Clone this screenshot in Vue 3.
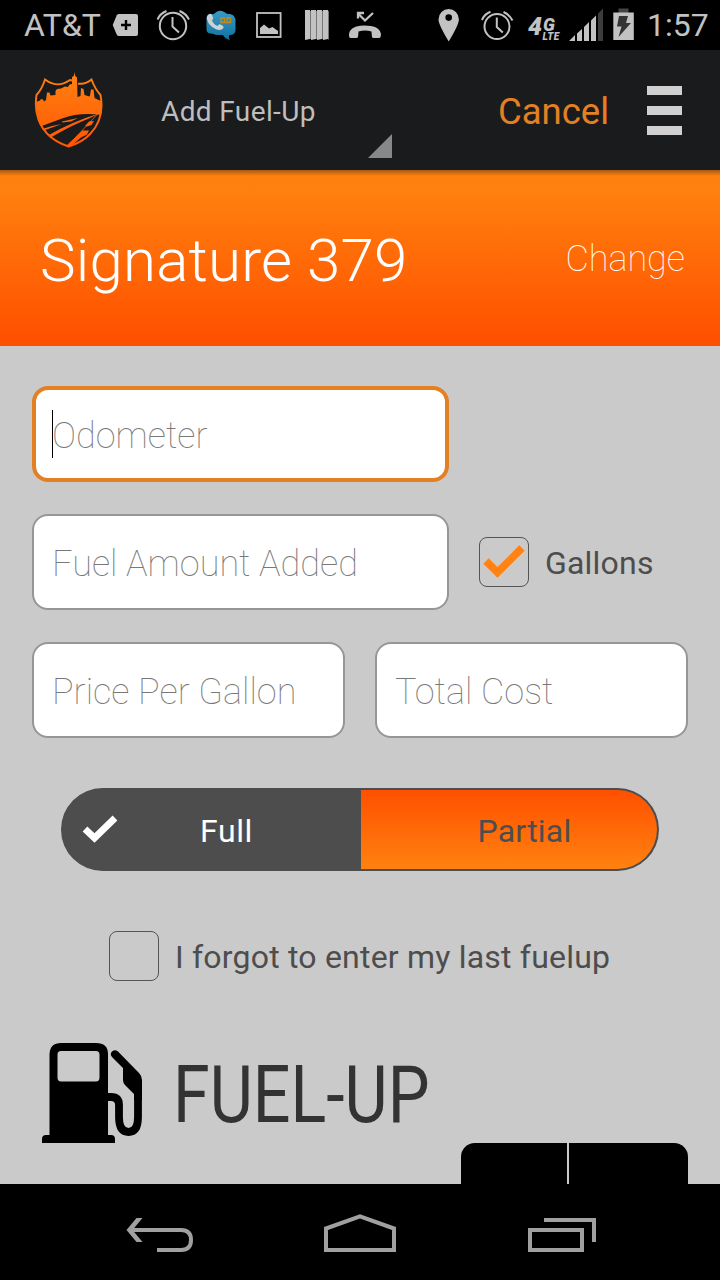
<script setup>
import { ref } from 'vue'

const fillType = ref('full')
const gallons = ref(true)
const forgot = ref(false)
</script>

<template>
  <div class="screen">
    <div class="status-bar">
      <span class="carrier">AT&amp;T</span>
      <svg width="40" height="50" viewBox="108 0 40 50">
        <path d="M119 14h17q2 0 2 2v18q0 2-2 2h-17q-1.500 0-2.200-1.300L112.700 25l4.100-9.700q.7-1.300 2.200-1.300z" fill="#c2c2c2" />
        <path d="M126 20v10M121 25h10" stroke="#000" stroke-width="2.400" />
      </svg>
      <svg width="48" height="50" viewBox="148 0 48 50">
        <g fill="none" stroke="#c2c2c2" stroke-width="2">
          <circle cx="173" cy="26" r="13.200" />
          <path d="M172.500 17v9.500l6.500 6" />
          <path d="M157.500 19.500q2.500-6 9-8.500M179.500 11q6.500 2.500 9.500 8.500" />
        </g>
      </svg>
      <svg width="49" height="50" viewBox="196 0 49 50">
        <defs>
          <linearGradient id="bubble" x1="0" y1="0" x2="0" y2="1">
            <stop offset="0" stop-color="#369bc4" />
            <stop offset="1" stop-color="#12719f" />
          </linearGradient>
        </defs>
        <path d="M210 14q4 1 5-1 5-4 10-.5 2 2 5 1.500 5 1 5.500 6v10q0 5-6 5-1.500 2 .5 5-5-1-7-5h-7q-3-2-6-1.500-3.500-1-3.500-4V19q0-4 3.500-5z" fill="url(#bubble)" />
        <path d="M208.500 14.500q2-1.500 3.500.5l1.200 3q.3 1.200-1.200 2 1 4 5.500 6 1.500-2.500 3-1.500l2.500 1.500q1.500 1.500-.5 3-3 2-7 0-6.500-3-8.500-9.500-.8-3.500 1.500-5z" fill="#cbd2d5" />
        <path d="M222.500 22.500h7.500M221 18h3.500v4.500H221zM227 18h3.500v4.500H227z" fill="none" stroke="#c68a1b" stroke-width="1.300" />
      </svg>
      <svg width="48" height="50" viewBox="245 0 48 50">
        <rect x="257" y="13" width="23.600" height="24" fill="none" stroke="#c2c2c2" stroke-width="1.800" />
        <path d="M260 34v-6l4-3.500 5 4 3.500-1.500 5.500 4v3z" fill="#c2c2c2" />
      </svg>
      <svg width="48" height="50" viewBox="293 0 48 50">
        <path d="M305 10h5v29l-5 1zM311 10h5v29l-5 1zM317 10h5v29l-5 1zM323 10h5v29l-5 1z" fill="#c2c2c2" />
        <path d="M310.500 11v28M316.500 11v28M322.500 11v28M328.500 11v28.500" stroke="#777" />
      </svg>
      <svg width="48" height="50" viewBox="341 0 48 50">
        <path d="M349 34q1-7 11-8.200 5-.7 11 .2 9 1.500 10 8l-.3 2.500q-.4 1.500-2 1.500h-5q-1.700 0-1.800-1.500l-.4-5q-6.500-2-13 0l-.4 5q-.2 1.500-2 1.500h-5q-2 0-2-1.500z" fill="#c2c2c2" />
        <path d="M373 13l-8 7.500-6-6M358 18.500V13h6" fill="none" stroke="#c2c2c2" stroke-width="2.300" />
      </svg>
      <span class="spacer" />
      <svg width="44" height="50" viewBox="429 0 44 50">
        <path d="M448.700 41.500q-10.200-17-10.200-22a10.200 10.500 0 0 1 20.400 0q0 5-10.200 22zM448.700 14.300a3.300 3.300 0 1 0 0 6.600 3.300 3.300 0 0 0 0-6.600z" fill="#c2c2c2" fill-rule="evenodd" />
      </svg>
      <svg width="48" height="50" viewBox="473 0 48 50">
        <g fill="none" stroke="#c2c2c2" stroke-width="2">
          <circle cx="497" cy="26.500" r="12.500" />
          <path d="M496.800 17.500v9.500l6 5.500" />
          <path d="M482 20q2.500-6 8.500-8.200M503.500 12q6 2.500 9 8.500" />
        </g>
      </svg>
      <svg width="46" height="50" viewBox="521 0 46 50">
        <text class="network">
          <tspan class="gen" x="528" y="34.500">4</tspan><tspan class="gen-letter" x="543" y="31">G</tspan><tspan class="lte" x="542.500" y="40">LTE</tspan>
        </text>
      </svg>
      <svg width="40" height="50" viewBox="567 0 40 50">
        <path d="M569 41l6-6v6zM577 41v-7.500l5-4.500v12zM584 41V27l5-5v19zM591 41V20.500l5-5V41z" fill="#c2c2c2" />
        <path d="M598 41V13.500l5-5V41z" fill="#3c3c3c" />
      </svg>
      <svg width="34" height="50" viewBox="607 0 34 50">
        <path d="M618.500 8.500h10V13h-10z" fill="#444" />
        <path d="M613.300 12.500h20.500V40h-20.500z" fill="#c2c2c2" />
        <path d="M619 16h9l-2 7h5l-12.500 14 3-10.500h-4.500z" fill="#333" />
      </svg>
      <span class="clock">1:57</span>
    </div>

    <header class="action-bar">
      <svg class="logo" width="72" height="80" viewBox="33 70 72 80">
        <defs>
          <linearGradient id="shield" gradientUnits="userSpaceOnUse" x1="0" y1="76" x2="0" y2="146">
            <stop offset="0" stop-color="#ff8010" />
            <stop offset="1" stop-color="#ff5606" />
          </linearGradient>
          <clipPath id="shieldClip">
            <path d="M33 70h72v28l-4 0Q105 118 91 134 84 142 68.500 147 54 142 46 134 32 118 35.500 98H33z" />
          </clipPath>
        </defs>
        <g clip-path="url(#shieldClip)" fill="url(#shield)">
          <!-- skyline -->
          <path d="M36 102l4-1.500 1-1.500 2 .5 1 2 2-1.500 1-7.500h2.500l1 3 5-.5v-4l1.500-2 4-.5 4-2 3 .5 1.500-2.500 2.500-.5v-7l1.800-1 .7-4 .7 4 1.800 1.500.5 19.500 3-1 .5-8 2.500 1 1 6 5 1.500.5-1 1-6h2.500l1 8.500 4 2 3 1v14Q80 112 62 118.500L39 127z" />
          <!-- road -->
          <path d="M39 130q12-4.500 23-6l-14 5-7 2.500zM62 121.500l16-3.500-7 3.500-9 1z" />
          <path d="M47 136q24-14 52-22.500l-10 5Q72 125 50 138z" />
          <path d="M66 146l16.500-15.500h6.500l-2 4-6 3-11 9.500zM85 126l4-4.500 5-.5-2.500 4-4.500 1.500z" />
          <path d="M67.500 146L98 113.500" fill="none" stroke="url(#shield)" stroke-width=".8" />
        </g>
        <path d="M72 80.500l-2-.5q-9 6-17 3.700-4-1-8-4.200-3 9.500-8.500 15.500Q33 118 47 133.500 55 142 68.500 146.500 83 142 90.500 133.500 105 118 100.500 95 95 89 91.500 79.500 86 84 80.500 83.700H78" fill="none" stroke="url(#shield)" stroke-width="1.900" />
      </svg>
      <div class="spinner">
        <span class="spinner-label">Add Fuel-Up</span>
        <svg width="24" height="24" viewBox="0 0 24 24">
          <path d="M24 0v24H0z" fill="#888" />
        </svg>
      </div>
      <a class="cancel">Cancel</a>
      <div class="menu" role="button" aria-label="Menu">
        <i /><i /><i />
      </div>
    </header>

    <section class="vehicle">
      <span class="vehicle-name">Signature 379</span>
      <a class="change">Change</a>
    </section>

    <main class="form">
      <div class="row">
        <div class="field wide focused"><span class="caret" /><span class="hint odo">Odometer</span></div>
      </div>
      <div class="row">
        <div class="field wide"><span class="hint">Fuel Amount Added</span></div>
        <div class="check gallons" @click="gallons = !gallons">
          <span class="box">
            <svg v-if="gallons" width="42" height="34" viewBox="0 0 42 34">
              <path d="M3 16l11.500 11.500L39 3" fill="none" stroke="#ff8213" stroke-width="7.600" />
            </svg>
          </span>
          <span class="check-label">Gallons</span>
        </div>
      </div>
      <div class="row halves">
        <div class="field"><span class="hint">Price Per Gallon</span></div>
        <div class="field"><span class="hint">Total Cost</span></div>
      </div>

      <div class="segmented">
        <div class="segment" :class="{ active: fillType === 'full' }" @click="fillType = 'full'">
          <svg v-if="fillType === 'full'" class="tick" width="36" height="30" viewBox="0 0 36 30">
            <path d="M3 15l9.500 9L33 4" fill="none" stroke="#fff" stroke-width="6.800" />
          </svg>
          <span>Full</span>
        </div>
        <div class="segment" :class="{ active: fillType === 'partial' }" @click="fillType = 'partial'">
          <span>Partial</span>
        </div>
      </div>

      <div class="check forgot" @click="forgot = !forgot">
        <span class="box">
          <svg v-if="forgot" width="42" height="34" viewBox="0 0 42 34">
            <path d="M3 16l11.500 11.500L39 3" fill="none" stroke="#ff8213" stroke-width="7.600" />
          </svg>
        </span>
        <span class="check-label">I forgot to enter my last fuelup</span>
      </div>

      <div class="summary">
        <svg width="100" height="100" viewBox="0 0 100 100">
          <path d="M7.500 92V11Q8 0 19 0h35q12 0 12 11v81h3q4 0 4 4v4H0v-4q0-4 4-4zM19 8q-3.500 0-3.500 3.500v23q0 4 3.500 4h35q3.500 0 3.500-4v-23Q57.500 8 54 8z" fill-rule="evenodd" />
          <path d="M65 54h4q8 0 8 8v12q0 15 9.500 15T96 74V37" fill="none" stroke="#000" stroke-width="7.800" />
          <path d="M70 14q-2.500-3 0-5.500 3-2.500 6 0L97 30q3 3 3 7v20h-8v-6l-9-9q-2-2-2-5V25z" />
        </svg>
        <span class="summary-title">FUEL-UP</span>
        <div class="tabs"><i /><i /></div>
      </div>
    </main>

    <nav class="nav-bar">
      <svg width="240" height="96" viewBox="0 1184 240 96">
        <path d="M131 1230h50q10 0 10 10t-10 10h-24" fill="none" stroke="#a0a0a0" stroke-width="4" />
        <path d="M126.500 1230l10-12h6l-10 12 10 12h-6z" fill="#a0a0a0" />
      </svg>
      <svg width="240" height="96" viewBox="240 1184 240 96">
        <path d="M326 1250v-21.500l34-12.200 34 12.200V1250z" fill="none" stroke="#a0a0a0" stroke-width="4" />
      </svg>
      <svg width="240" height="96" viewBox="480 1184 240 96">
        <path d="M530 1230h52v20h-52zM544 1220h50v22" fill="none" stroke="#a0a0a0" stroke-width="4" />
      </svg>
    </nav>
  </div>
</template>

<style>
body {
  margin: 0;
  background: #000;
}
</style>

<style scoped>
.screen {
  display: flex;
  flex-direction: column;
  width: 720px;
  height: 1280px;
  overflow: hidden;
  background: #cacaca;
  font-family: Roboto, "Noto Sans", sans-serif;
  white-space: nowrap;
}

.screen * {
  box-sizing: border-box;
}

svg {
  display: block;
  flex: none;
}

.status-bar {
  display: flex;
  align-items: center;
  height: 50px;
  background: #000;
  color: #c2c2c2;
  font-size: 32px;
  line-height: 52px;
}

.carrier {
  width: 108px;
  padding-left: 24px;
}

.spacer {
  flex: 1;
}

.clock {
  width: 79px;
  padding-left: 6px;
}

.network {
  fill: #c2c2c2;
  font-weight: 900;
  font-style: italic;
}

.gen {
  font-size: 25px;
}

.gen-letter {
  font-size: 18px;
}

.lte {
  font-size: 10px;
  letter-spacing: 0.4px;
}

.action-bar {
  display: flex;
  align-items: center;
  height: 120px;
  background: #1a1b1d;
}

.logo {
  margin-left: 33px;
}

.spinner {
  display: flex;
  align-items: flex-end;
  justify-content: space-between;
  width: 231px;
  height: 96px;
  margin-left: 56px;
}

.spinner-label {
  align-self: center;
  padding-top: 3px;
  color: #bebebe;
  font-size: 28px;
  line-height: 40px;
  letter-spacing: 0.38px;
}

.cancel {
  margin-left: 106px;
  padding-top: 3px;
  color: #e48024;
  font-size: 36.5px;
  line-height: 44px;
}

.menu {
  display: flex;
  flex-direction: column;
  gap: 11px;
  width: 35px;
  margin: 0 38px 0 auto;
}

.menu i {
  height: 9px;
  background: #d0d0d0;
}

.vehicle {
  display: flex;
  align-items: center;
  justify-content: space-between;
  height: 176px;
  padding: 4px 35px 0 40px;
  background: linear-gradient(rgba(80, 50, 20, 0.5), rgba(120, 80, 20, 0) 6px), linear-gradient(#fc8110, #ff800e 12%, #ff5000 97%);
  color: #fff;
}

.vehicle-name {
  font-size: 60px;
  font-weight: 300;
  letter-spacing: 0.2px;
}

.change {
  margin-top: -2px;
  font-size: 36px;
  font-weight: 100;
}

.form {
  display: flex;
  flex-direction: column;
  height: 838px;
  padding: 40px 32px 0;
}

.row {
  display: flex;
  align-items: center;
  margin-bottom: 32px;
}

.halves {
  gap: 30px;
}

.field {
  display: flex;
  align-items: center;
  flex: 1;
  height: 96px;
  padding: 3px 0 0 18px;
  border: 2px solid #969696;
  border-radius: 16px;
  background: #fff;
}

.field.wide {
  flex: none;
  width: 417px;
}

.field.focused {
  padding: 0 0 0 16px;
  border: 4px solid #e48024;
}

.caret {
  width: 1px;
  height: 48px;
  margin-right: -1px;
  background: #000;
}

.hint {
  color: #787878;
  font-size: 36px;
  font-weight: 100;
}

.odo {
  padding-top: 3px;
}

.check {
  display: flex;
  align-items: center;
}

.gallons {
  margin-left: 30px;
}

.box {
  display: flex;
  align-items: center;
  justify-content: center;
  width: 50px;
  height: 50px;
  border: 1.5px solid #555;
  border-radius: 8px;
}

.check-label {
  padding: 2px 0 0 16px;
  color: #4d4d4d;
  font-size: 32px;
  letter-spacing: 0.2px;
}

.segmented {
  display: flex;
  width: 598px;
  height: 83px;
  margin: 18px 0 0 29px;
  padding: 2px;
  border-radius: 42px;
  background: #4d4d4d;
}

.segment {
  display: flex;
  align-items: center;
  justify-content: center;
  flex: 1;
  padding: 3px 0 0 31px;
  border-radius: 0 40px 40px 0;
  background: linear-gradient(#ff5000, #ff8210);
  color: #4d4d4d;
  font-size: 32px;
  letter-spacing: 0.2px;
}

.segment:first-child {
  flex: 0 0 298px;
  justify-content: flex-start;
  padding-left: 19px;
  border-radius: 40px 0 0 40px;
}

.segment.active {
  background: #4d4d4d;
  color: #fff;
  letter-spacing: 0.6px;
}

.tick {
  margin: -4px 82px 0 0;
}

.forgot {
  margin: 60px 0 0 77px;
}

.summary {
  display: flex;
  align-items: flex-start;
  margin-top: 62px;
  padding-left: 10px;
}

.summary-title {
  width: 0;
  margin-left: 27px;
  color: #333;
  font-size: 80px;
  line-height: 105px;
  transform: translateX(4px) scaleX(0.83);
  transform-origin: 0 50%;
}

.tabs {
  display: flex;
  gap: 2px;
  width: 227px;
  height: 41px;
  margin: 100px 0 0 auto;
  border-radius: 14px 14px 0 0;
  overflow: hidden;
}

.tabs i {
  flex: 1;
  background: #000;
}

.tabs i:first-child {
  flex: 0 0 106px;
}

.nav-bar {
  display: flex;
  height: 96px;
  background: #000;
}
</style>
